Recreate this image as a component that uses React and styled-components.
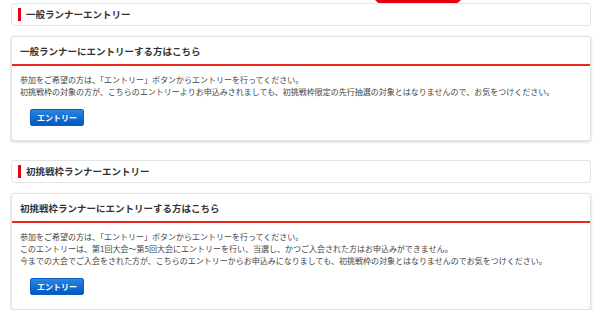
import React from "react";
import styled, {createGlobalStyle} from "styled-components";

const GlobalStyle = createGlobalStyle`
  body {
    margin: 0;
    background: #fff;
    font-family: "Noto Sans CJK JP", "Noto Sans", sans-serif;
    color: #333;
  }
`;

const sections = [
    {
        label: "一般ランナーエントリー",
        title: "一般ランナーにエントリーする方はこちら",
        lines: [
            "参加をご希望の方は、「エントリー」ボタンからエントリーを行ってください。",
            "初挑戦枠の対象の方が、こちらのエントリーよりお申込みされましても、初挑戦枠限定の先行抽選の対象とはなりませんので、お気をつけください。",
        ],
    },
    {
        label: "初挑戦枠ランナーエントリー",
        title: "初挑戦枠ランナーにエントリーする方はこちら",
        lines: [
            "参加をご希望の方は、「エントリー」ボタンからエントリーを行ってください。",
            "このエントリーは、第1回大会〜第5回大会にエントリーを行い、当選し、かつご入会された方はお申込みができません。",
            "今までの大会でご入会をされた方が、こちらのエントリーからお申込みになりましても、初挑戦枠の対象とはなりませんのでお気をつけください。",
        ],
    },
];

export default function App() {
    return (
        <>
            <GlobalStyle/>
            <Page>
                <TopStrip>
                    <Tab/>
                </TopStrip>
                {sections.map((s, i) => (
                    <Section key={s.label} $first={i === 0}>
                        <SectionHeader>
                            <Bar/>
                            <SectionLabel>{s.label}</SectionLabel>
                        </SectionHeader>
                        <Card>
                            <CardHead>{s.title}</CardHead>
                            <CardBody>
                                {s.lines.map((line) => (
                                    <Line key={line}>{line}</Line>
                                ))}
                                <EntryButton type="button">エントリー</EntryButton>
                            </CardBody>
                        </Card>
                    </Section>
                ))}
            </Page>
        </>
    );
}

const Page = styled.div`
  width: 580px;
  padding: 0 9px 0 11px;
`;

const TopStrip = styled.div`
  height: 3px;
  display: flex;
  padding-left: 364px;
`;

const Tab = styled.div`
  width: 86px;
  height: 3px;
  background: #e60012;
  clip-path: polygon(0 0, 100% 0, 96% 100%, 4% 100%);
`;

const Section = styled.section`
  margin-top: ${({$first}) => ($first ? "0" : "19px")};
`;

const SectionHeader = styled.div`
  height: 23px;
  box-sizing: border-box;
  border: 1px solid #e4e4e4;
  border-radius: 3px;
  background: #fff;
  display: flex;
  align-items: center;
  padding-left: 6px;
`;

const Bar = styled.span`
  width: 3px;
  height: 13px;
  background: #e60012;
  margin-right: 5px;
`;

const SectionLabel = styled.h2`
  margin: 0;
  font-size: 9.5px;
  font-weight: 700;
  color: #333;
  line-height: 1;
`;

const Card = styled.div`
  margin-top: 10px;
  border: 1px solid #e2e2e2;
  border-radius: 3px;
  background: #fff;
  box-shadow: 0 1px 3px rgba(0, 0, 0, 0.18);
`;

const CardHead = styled.h3`
  margin: 0;
  height: 29px;
  box-sizing: border-box;
  display: flex;
  align-items: center;
  padding-left: 8px;
  border-bottom: 2px solid #e8281e;
  font-size: 9.5px;
  font-weight: 700;
  color: #333;
`;

const CardBody = styled.div`
  padding: 8px 8px 14px;
`;

const Line = styled.p`
  margin: 0;
  font-size: 8px;
  line-height: 12px;
  color: #444;
`;

const EntryButton = styled.button`
  display: block;
  margin: 11px 0 0 10px;
  width: 54px;
  height: 17px;
  padding: 0;
  border: 1px solid #0a5fbf;
  border-radius: 2px;
  background: linear-gradient(#2a86e0, #0058c4);
  color: #fff;
  font-family: inherit;
  font-size: 8px;
  font-weight: 700;
  line-height: 15px;
`;
